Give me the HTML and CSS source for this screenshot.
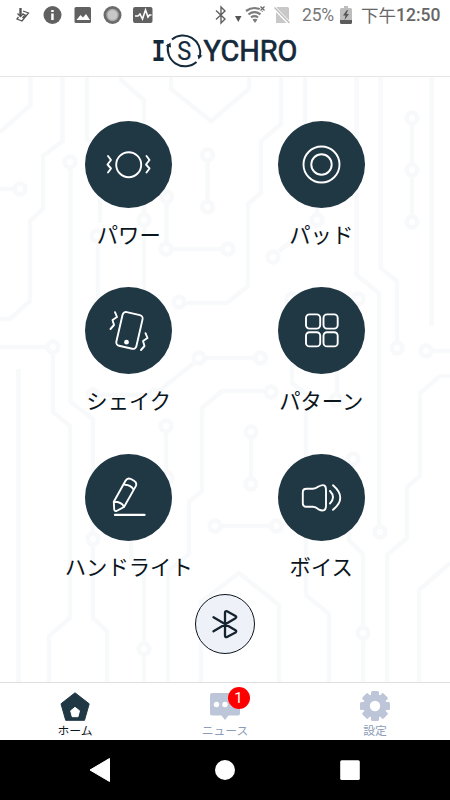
FILE: index.html
```html
<!DOCTYPE html>
<html lang="ja">
<head>
<meta charset="utf-8">
<title>ISYCHRO</title>
<link rel="stylesheet" href="styles.css">
</head>
<body>
<div class="app">
  <header class="top">
    <div class="status">
      <svg class="status-left" width="160" height="30" viewBox="0 0 160 30">
        <g fill="none" stroke="#555" stroke-width="1.3"><path d="M23 11l5.500 2-6.500 8-5-2 1.500-2M22.500 14l2.500 1-2.500 3" /><path d="M20.500 8v8" stroke-width="2.400"/><path d="M17.500 13.500l3 3 3-3"/></g>
        <circle cx="52.500" cy="15" r="9" fill="#616161"/><path d="M51.200 10h2.500v2h-2.500zM51.200 13.500h2.500V20h-2.500z" fill="#fff"/>
        <rect x="74.500" y="7" width="16.500" height="16" rx="1.500" fill="#616161"/><path d="M76.500 20l4-5 2.500 2.500 3-3.500 4 6z" fill="#fff"/>
        <circle cx="112.500" cy="15" r="9" fill="#6b6b6b"/><circle cx="112.500" cy="15" r="5.500" fill="#c8c8c8" stroke="#aaa" stroke-width="1.400"/>
        <rect x="133" y="7" width="19.500" height="16" rx="2" fill="#616161"/><path d="M135 16h3l2-2 2.500 5 3-9 2.500 7 1.500-2h2" fill="none" stroke="#fff" stroke-width="1.600"/>
      </svg>
      <svg class="status-right" width="88" height="30" viewBox="212 0 88 30">
        <path d="M216 10.500l9 8.500-4 4V7l4 4-9 8.500" fill="none" stroke="#616161" stroke-width="1.400"/>
        <path d="M235 16h6.500l-3.200 6z" fill="#555"/>
        <path d="M246 11q8.500-6 17 0M248.500 14.300q6-4.200 12 0M251 17.300q3.500-2.400 7 0" fill="none" stroke="#7c7c7c" stroke-width="2.200"/><path d="M252.500 19.500q2.500-1.500 5 0l-2.500 3.500z" fill="#7c7c7c"/>
        <path d="M260 6l5 5M265 6l-5 5" stroke="#fff" stroke-width="3"/><path d="M260.500 6.500l4 4M264.500 6.500l-4 4" stroke="#666" stroke-width="1.200"/>
        <path d="M277 7h10.500q1.500 0 1.500 1.500V23h-13V10z" fill="#c8c8c8"/><path d="M274 7.500l15.500 16" stroke="#fff" stroke-width="3.400"/><path d="M274.500 7.500l15 15.500" stroke="#bbb" stroke-width="1.300"/>
      </svg>
      <span class="pct">25%</span>
      <svg class="battery" width="12" height="18" viewBox="0 0 12 18"><path d="M4 0h4v2h2.500q1.500 0 1.500 1.500V15H0V3.500Q0 2 1.500 2H4z" fill="#bdbdbd"/><path d="M0 14h12v2.500q0 1.500-1.500 1.500h-9Q0 18 0 16.500z" fill="#5c5c5c"/><path d="M7 4L3 9.500h2.500L4.500 14 9 8H6.500L8 4z" fill="#555"/></svg>
      <span class="clock"><span class="ampm">下午</span>12:50</span>
    </div>
    <svg class="logo" width="150" height="44" viewBox="150 32 150 44">
      <g class="logo-text">
        <text class="logo-i" x="151.800" y="61.200" textLength="13.500" lengthAdjust="spacingAndGlyphs">I</text>
        <text class="logo-s" x="177.300" y="59.800" textLength="14" lengthAdjust="spacingAndGlyphs">S</text>
        <text x="203.500" y="61.300" textLength="94" lengthAdjust="spacingAndGlyphs">YCHRO</text>
      </g>
      <path d="M172 39.500A17.300 17.300 0 0 1 200 56M196.500 62A17.300 17.300 0 0 1 168.500 44" fill="none" stroke="#14293a" stroke-width="2"/>
      <path d="M165.500 46l5-3.500.5 5zM197.500 55l5 .5-4 4z" fill="#14293a"/>
    </svg>
  </header>

  <main class="board">
    <svg class="circuit" width="450" height="605" viewBox="0 77 450 605">
      <g class="trace">
        <path d="M30.500 76V105L0 132M62.500 76V141L43 156V209L30 221V301L10 319H0M87 76V139L100 150V223M98 243V300M121 76V80L144 100V213M144 227V300M171 76V89L211 121L249 89V76"/>
        <path d="M70.500 169V402L93 419V532M93 546V618L107 631V682M0 189H13M207.500 162V200M166.500 204V242M173 249H221M281 76V124L261 141V193L248 204V286L227 303H186M305 76V150M317 190V213M311 225L279 251"/>
        <path d="M356.500 76V275L379 293V525M380.500 76V268L397 281V341M431.500 76V326M412 125V163M412 177V215M433 351H450M206 358H254M194 363L160 390M148 395H100M0 347H46M53 354V412L70 426V618L49 636V682M18.500 369V682"/>
        <path d="M292 306V383L306 394V595L329 614V682M337 340V393M264 391H222L202 408V491L189 502V554L168 571V682M166 433V471M251 439V477M222 526H270M353 466L349 480V540L363 554V626M363 640V682"/>
        <path d="M450 376H440L420 393V476L407 487V538L387 555V682M450 563L419 590V682M201 682V602L239 573L279 605V682M131 500V557L144 568V642M144 656V682"/>
      </g>
      <g class="node">
        <circle cx="70" cy="162" r="5.300"/><circle cx="20" cy="189" r="5.300"/><circle cx="207.500" cy="155" r="5.300"/><circle cx="207.500" cy="207" r="5.300"/><circle cx="166.500" cy="197" r="5.300"/><circle cx="166" cy="249" r="5.300"/><circle cx="228" cy="249" r="5.300"/><circle cx="179" cy="302" r="5.300"/><circle cx="97" cy="236" r="5.300"/><circle cx="144" cy="220" r="5.300"/>
        <circle cx="317" cy="220" r="5.300"/><circle cx="273" cy="257" r="5.300"/><circle cx="397" cy="348" r="5.300"/><circle cx="412" cy="118" r="5.300"/><circle cx="412" cy="170" r="5.300"/><circle cx="412" cy="222" r="5.300"/><circle cx="426" cy="351" r="5.300"/><circle cx="358" cy="299" r="5.300"/><circle cx="292" cy="299" r="5.300"/><circle cx="199" cy="358" r="5.300"/><circle cx="260.500" cy="358" r="5.300"/>
        <circle cx="53" cy="347" r="5.300"/><circle cx="93" cy="395" r="5.300"/><circle cx="155" cy="395" r="5.300"/><circle cx="336" cy="400" r="5.300"/><circle cx="271" cy="392" r="5.300"/><circle cx="166" cy="426" r="5.300"/><circle cx="167" cy="478" r="5.300"/><circle cx="251" cy="432" r="5.300"/><circle cx="251" cy="484" r="5.300"/><circle cx="215" cy="526" r="5.300"/><circle cx="276.500" cy="526" r="5.300"/><circle cx="353" cy="459" r="5.300"/><circle cx="380" cy="532" r="5.300"/><circle cx="93" cy="539" r="5.300"/><circle cx="363" cy="633" r="5.300"/><circle cx="144" cy="649" r="5.300"/>
      </g>
    </svg>

    <div class="modes">
      <div class="mode">
        <div class="disc"><svg width="87" height="87" viewBox="85 121 87 87"><circle cx="128.700" cy="164.700" r="12.500"/><path d="M108 156l3 4-3.500 4.500 3.500 4-3 4M146.500 156l3 4-3.500 4.500 3.500 4-3 4"/></svg></div>
        <span>パワー</span>
      </div>
      <div class="mode">
        <div class="disc"><svg width="87" height="87" viewBox="277.500 121 87 87"><circle cx="321" cy="164.500" r="18"/><circle cx="321" cy="164.500" r="10.200"/></svg></div>
        <span>パッド</span>
      </div>
      <div class="mode">
        <div class="disc"><svg width="87" height="87" viewBox="85 287.300 87 87"><rect x="119.200" y="313.500" width="20.500" height="34.500" rx="3.500" transform="rotate(13 129.400 330.800)"/><circle class="solid" cx="126.500" cy="342.500" r="2.400"/><path d="M115 312.500l2 4.800-4.500 3 1.500 5-3.500 4M145.500 333.500l2 4.800-4.500 3 1.500 5-3.500 4"/></svg></div>
        <span>シェイク</span>
      </div>
      <div class="mode">
        <div class="disc"><svg width="87" height="87" viewBox="277.500 287.300 87 87"><rect x="305.500" y="314.700" width="14.200" height="14.200" rx="3.500"/><rect x="323" y="314.700" width="14.200" height="14.200" rx="3.500"/><rect x="305.500" y="332.500" width="14.200" height="14.200" rx="3.500"/><rect x="323" y="332.500" width="14.200" height="14.200" rx="3.500"/></svg></div>
        <span>パターン</span>
      </div>
      <div class="mode">
        <div class="disc"><svg width="87" height="87" viewBox="85 453.700 87 87"><path d="M113.800 501.500L125.500 480.500Q127.300 477.300 130.500 478.500L134 480.500Q137.300 482.500 135.800 485.800L124 506.700 116.500 510.700Q114.300 511.200 114.200 509ZM125 484.500Q131 484.800 133.500 489.200M114 501.500Q122 501.500 124 506.700"/><path d="M115 514.600H144.500" stroke-width="2.300"/></svg></div>
        <span>ハンドライト</span>
      </div>
      <div class="mode">
        <div class="disc"><svg width="87" height="87" viewBox="277.500 453.700 87 87"><path d="M306 488.500H312.500Q315 488.500 318 486.200 325.500 482.200 325.500 489.500V505.500Q325.500 512.500 318 509 315 506.500 312.500 506.500H306Q302.300 506.500 302.300 503V492Q302.300 488.500 306 488.500ZM329.500 490.700Q335.500 497 329.500 503.200M332.500 485Q347 497.500 332.500 509.500"/></svg></div>
        <span>ボイス</span>
      </div>
    </div>
    <button class="bt" aria-label="Bluetooth"><svg width="30" height="34" viewBox="210 607 30 34"><path d="M213.500 617.300L235.500 630.200Q237 631.300 235.500 632.500L227 637Q225 637.700 225 635.800V613Q225 610.500 227 611.300L235.500 616Q237 617 235.500 618.200L213.500 631.300"/></svg></button>
  </main>

  <nav class="tabs">
    <div class="tab active">
      <svg width="34" height="32" viewBox="58 690 34 32"><path d="M75 692.800L89.200 703.800 84.500 720.300H65.700L61 703.800Z" fill="#203744" stroke="#203744" stroke-width="1" stroke-linejoin="round"/><path d="M75 707.300L79.500 710.800 78 716.700H72.200L70.700 710.800Z" fill="#fff" stroke="#fff" stroke-linejoin="round"/></svg>
      <span>ホーム</span>
    </div>
    <div class="tab">
      <div class="news"><svg width="34" height="32" viewBox="208 690 34 32"><path d="M212 693H238Q240 693 240 695V713.500Q240 715.500 238 715.500H228.500L225 720 221.500 715.500H212Q210 715.500 210 713.500V695Q210 693 212 693Z" fill="#bdc6d9"/><g fill="#fff"><circle cx="216.500" cy="704.500" r="2.700"/><circle cx="225" cy="704.500" r="2.700"/><circle cx="233.500" cy="704.500" r="2.700"/></g></svg><b class="badge">1</b></div>
      <span>ニュース</span>
    </div>
    <div class="tab">
      <svg width="34" height="32" viewBox="-17 -16 34 32"><g fill="#bdc6d9"><circle r="11.700"/><g><rect x="-4" y="-15" width="8" height="30" rx="1.500"/><rect x="-15" y="-4" width="30" height="8" rx="1.500"/></g><g transform="rotate(45)"><rect x="-4" y="-15" width="8" height="30" rx="1.500"/><rect x="-15" y="-4" width="30" height="8" rx="1.500"/></g></g><circle r="5.200" fill="#fff"/></svg>
      <span>設定</span>
    </div>
  </nav>

  <footer class="sysnav">
    <svg width="24" height="26" viewBox="0 0 24 26"><path d="M2 13L21.500 1.500V24.500Z" fill="#fff" stroke="#fff" stroke-linejoin="round"/></svg>
    <svg width="24" height="26" viewBox="0 0 24 26"><circle cx="12" cy="13" r="10" fill="#fff"/></svg>
    <svg width="24" height="26" viewBox="0 0 24 26"><rect x="2.200" y="3.300" width="19.600" height="19.600" rx="1.500" fill="#fff"/></svg>
  </footer>
</div>
</body>
</html>
```
FILE: styles.css
```css
* { box-sizing: border-box; }
body { margin: 0; background: #fff; font-family: "Noto Sans CJK JP", sans-serif; }
svg { display: block; flex: none; }
.app { width: 450px; height: 800px; display: flex; flex-direction: column; overflow: hidden; }

.top { height: 77px; border-bottom: 1px solid #e6e6e8; }
.status { display: flex; align-items: center; height: 30px; margin-bottom: 2px; color: #777; font-family: Roboto, "Noto Sans CJK JP", sans-serif; }
.status-right { margin-left: 52px; }
.pct { width: 36px; margin-left: 2px; font-size: 17.500px; line-height: 30px; letter-spacing: -0.200px; white-space: nowrap; }
.battery { margin: 0 0 0 2px; }
.clock { display: flex; margin-left: 9px; font-size: 17.500px; font-weight: 500; line-height: 30px; color: #666; white-space: nowrap; }
.ampm { font-family: "Noto Sans CJK JP", sans-serif; font-weight: 400; }
.logo { margin: 0 auto 0 150px; }
.logo-text { font: 400 29.500px Roboto, sans-serif; fill: #14293a; stroke: #14293a; stroke-width: 0.700; stroke-linejoin: round; }
.logo-i { font: 700 32px "Liberation Mono", monospace; stroke: none; }
.logo-s { font: 400 26px Roboto, sans-serif; stroke-width: 0.200; }

.board { position: relative; height: 605px; padding: 44px 32.500px 0 32.500px; }
.circuit { position: absolute; inset: 0; z-index: -1; }
.trace { fill: none; stroke: #f8f9fb; stroke-width: 4.500; }
.node { fill: none; stroke: #f8f9fb; stroke-width: 4.700; }
.modes { display: grid; grid-template-columns: 192.500px 192.500px; grid-auto-rows: 166.350px; }
.mode { display: flex; flex-direction: column; align-items: center; font-size: 21.330px; line-height: 32px; color: #0b151c; white-space: nowrap; }
.disc { width: 87px; height: 87px; border-radius: 50%; background: #203744; margin-bottom: 9.500px; }
.disc svg { fill: none; stroke: #fff; stroke-width: 1.900; stroke-linecap: round; stroke-linejoin: round; }
.disc .solid { fill: #fff; stroke: none; }
.bt { display: grid; place-items: center; width: 60px; height: 60px; margin: -26px 0 0 162.500px; padding: 0; border: 1px solid #0b151c; border-radius: 50%; background: #eef1f8; }
.bt svg { fill: none; stroke: #14232d; stroke-width: 2.300; stroke-linecap: round; stroke-linejoin: round; }

.tabs { display: grid; grid-template-columns: repeat(3, 1fr); height: 58px; border-top: 1px solid #dfdfe1; background: #fff; }
.tab { display: flex; flex-direction: column; align-items: center; padding-top: 7px; font-size: 11.800px; line-height: 16px; color: #8d9db9; }
.tab.active { color: #0b151c; }
.news { position: relative; }
.badge { position: absolute; left: 19.500px; top: -3px; width: 22px; height: 22px; border-radius: 50%; background: #f00; color: #fff; font: 400 15px/22px Roboto, sans-serif; text-align: center; }

.sysnav { display: grid; grid-template-columns: repeat(3, 150px); place-items: center; height: 60px; background: #000; padding: 0; }
.sysnav svg:first-child { margin-left: 50px; }
.sysnav svg:last-child { margin-right: 50px; }
```
